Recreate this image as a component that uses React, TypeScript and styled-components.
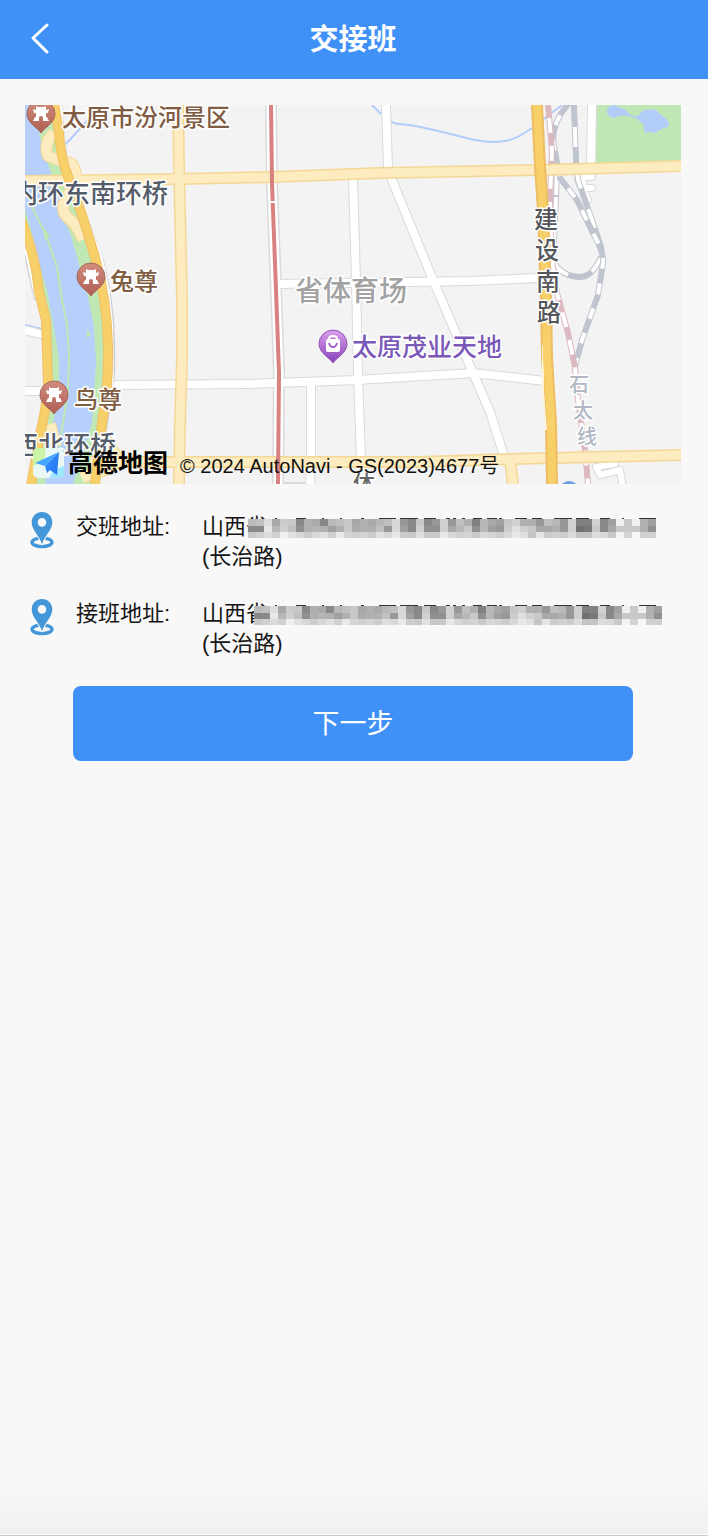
import React from 'react';
import styled, { createGlobalStyle } from 'styled-components';

const GlobalStyle = createGlobalStyle`
  * { box-sizing: border-box; }
  body {
    margin: 0;
    background: #f8f8f8;
    color: #141414;
    font-family: "Liberation Sans", "Noto Sans CJK SC", sans-serif;
  }
`;

const Page = styled.div`
  display: flex;
  flex-direction: column;
  min-height: 100vh;
`;

const Header = styled.header`
  display: grid;
  grid-template-columns: 80px 1fr 80px;
  align-items: center;
  height: 79px;
  padding-right: 2px;
  background: #3f91f7;
  color: #fff;
`;

const BackButton = styled.button`
  display: flex;
  align-items: center;
  justify-content: center;
  width: 80px;
  height: 76px;
  padding: 0 0 4px;
  border: 0;
  background: none;
  color: inherit;
  cursor: pointer;
`;

const Title = styled.h1`
  margin: 0;
  font-size: 29px;
  line-height: 40px;
  font-weight: 700;
  text-align: center;
`;

const Main = styled.main`
  flex: 1;
  padding: 26px 27px 0 25px;
`;

const MapView = styled.svg`
  display: block;
  width: 100%;
  height: auto;
  background: #f3f3f3;
`;

const MapLabel = styled.text<{ $size: number; $color: string }>`
  font-family: "Noto Sans CJK SC", sans-serif;
  font-size: ${(p) => p.$size}px;
  font-weight: 500;
  fill: ${(p) => p.$color};
  stroke: #fff;
  stroke-width: 3px;
  stroke-linejoin: round;
  paint-order: stroke;
`;

const BrandText = styled.text`
  font-family: "Noto Sans CJK SC", sans-serif;
  font-size: 25px;
  font-weight: 700;
`;

const Copyright = styled.text`
  font-family: "Liberation Sans", "Noto Sans CJK SC", sans-serif;
  font-size: 20px;
  fill: #111;
`;

const AddressList = styled.dl`
  display: flex;
  flex-direction: column;
  gap: 27px;
  margin: 28px 0 0;
  font-size: 22px;
  line-height: 30px;
`;

const AddressRow = styled.div`
  display: grid;
  grid-template-columns: 177px 1fr;
`;

const AddressLabel = styled.dt`
  display: flex;
  gap: 22px;
  padding-left: 5px;
`;

const AddressValue = styled.dd`
  margin: 0;
`;

const AddressLine = styled.div`
  display: flex;
  height: 30px;
  white-space: nowrap;
`;

const Mask = styled.svg<{ $overlap: number }>`
  flex: none;
  margin-left: -${(p) => p.$overlap}px;
`;

const NextButton = styled.button`
  display: block;
  width: calc(100% - 96px);
  height: 75px;
  margin: 27px auto 0;
  border: 0;
  border-radius: 8px;
  background: #3f91f7;
  color: #fff;
  font-family: inherit;
  font-size: 27px;
  line-height: 40px;
  cursor: pointer;
`;

const Footer = styled.footer`
  height: 52px;
  border-bottom: 1px solid #cbcbcb;
  background: linear-gradient(#f8f8f8, #f0f0f0);
  box-shadow: inset 0 -1px 0 #fcfcfc;
`;

function PlaceIcon() {
  return (
    <svg width="24" height="38" viewBox="0 0 72 114" aria-hidden="true">
      <ellipse cx="36" cy="91" rx="30" ry="13" fill="none" stroke="#4396d8" strokeWidth="10" />
      <path d="M36 102C31 84 9 64 6 34h60C63 64 41 84 36 102z" fill="#f8f8f8" />
      <path
        fillRule="evenodd"
        d="M36 0C18 0 5 13 5 31C5 55 30 74 36 97C42 74 67 55 67 31C67 13 54 0 36 0ZM36 18a13 13 0 1 1 0 26a13 13 0 1 1 0-26Z"
        fill="#4396d8"
      />
    </svg>
  );
}

/* Grey levels of the mosaic, two hex digits per 8px cell. */
const MASK_ROWS = [
  'bbc0dda8ccc888b0aa88b8c0c8a8b0aab8c0d89888c88898d098c0b080b8a8a0c8d0b0b098c0b898d08080d088a0f0c8f0b0a0',
  '8888e8b8d0c090b0b4b0a0b0c8acb0b0c098d8a088d09090d0a8b8c890b8a098cce0d0c8a8a8b098d07078c888a8c8c8c8b090',
  'c8d0dcd0f0e0d8ccd8e0d0e8d4d0d4cce0d8e8ccc8e0c8c8e8d8d0d4c8d8d4ccd8e8e0c4e4ccd0ccdcc4c4dcd8c8f4d4f8d0d0',
];

/* Stroke tips that stay visible above the mosaic: [x, width]. */
const TIPS: [number, number][] = [
  [27, 2], [48, 10], [74, 2], [92, 2], [113, 3], [131, 17], [152, 18], [176, 12],
  [198, 4], [205, 3], [214, 3], [225, 9], [239, 10], [251, 3], [267, 12], [284, 10],
  [306, 18], [328, 13], [352, 10], [374, 2], [391, 17],
];

function AddressMask({ overlap }: { overlap: number }) {
  return (
    <Mask $overlap={overlap} width="418" height="30" viewBox="0 0 418 30" role="img" aria-label="已隐藏" shapeRendering="crispEdges">
      <rect y="7" width="408" height="19" fill="#f8f8f8" />
      {MASK_ROWS.map((row, r) =>
        row.match(/../g)!.map((g, c) => (
          <rect key={`${r}-${c}`} x={c * 8} y={r === 0 ? 7 : 8 + r * 6} width="8" height={r === 0 ? 7 : 6} fill={`#${g}${g}${g}`} />
        )),
      )}
      {TIPS.map(([x, w]) => (
        <rect key={x} x={x + overlap - 20} y="6" width={w} height="1" fill="#333" />
      ))}
    </Mask>
  );
}

function Address({ label, overlap }: { label: string; overlap: number }) {
  return (
    <AddressRow>
      <AddressLabel>
        <PlaceIcon />
        {label}
      </AddressLabel>
      <AddressValue>
        <AddressLine>
          山西省
          <AddressMask overlap={overlap} />
        </AddressLine>
        <AddressLine>(长治路)</AddressLine>
      </AddressValue>
    </AddressRow>
  );
}

const METRO = 'M271 105L272 183L276 290L279 373L278 484';
const LANE = 'M592 177H582L584 188H592M578 180L588 200M615 464L596 467L600 475L620 470L623 488';
const EXPRESSWAY = 'M537 105L540 167L543 210L546 300L547 357L551 423L552 484';
const RAMPS =
  'M54 133Q43 143 48 156L62 161M66 162Q77 162 76 184M71 190Q58 208 67 217Q77 224 83 240M50 424L56 446M104 436L114 452Q121 463 106 470Q90 474 82 478';

const STREETS = [
  'M386 105L388 167L392 180L433 280L473 373L490 412L505 459',
  'M353 178L356 280L358 373L361 459',
  'M311 384V459L310 484',
  'M279 284L470 281L538 278',
  'M110 385L250 384L357 380L473 373L510 377L545 381',
  'M25 330L44 335',
  'M25 391H46',
  'M592 105L591 170',
];

const AVENUES = [
  'M25 181L180 179L272 177L380 173L540 170L681 166',
  'M178 105L179 167L182 300L182 357L180 423L179 484',
  'M90 462L250 462L420 462L510 459L681 455',
  'M510 460L513 484',
];

const RIVERSIDE = [
  'M54 103L59 133Q60 150 65 168L82 215L95 257Q107 300 108 345Q109 385 102 423L95 484',
  'M21 220Q36 256 39 292L46 320L48 385Q46 410 41 430L31 486',
];

function Pin({ x, y, kind = 'temple' }: { x: number; y: number; kind?: 'temple' | 'shop' }) {
  return (
    <g transform={`translate(${x} ${y})`}>
      <path
        d="M0 19C-3 14-14 9-14 0A14 14 0 1 1 14 0C14 9 3 14 0 19Z"
        fill={kind === 'shop' ? 'url(#shopPin)' : 'url(#templePin)'}
        stroke={kind === 'shop' ? '#8f55b5' : '#a5665b'}
        strokeWidth="1"
      />
      {kind === 'temple' ? (
        <path
          d="M-5-8L-3-7H3L5-8V-4L8-5L7-1H5V3H6L8 7H2V4Q2 2 0 2Q-2 2-2 4V7H-8L-6 3H-5V-1H-7L-8-5L-5-4Z"
          fill="#fff"
        />
      ) : (
        <g>
          <rect x="-7" y="-5" width="14" height="13" rx="2" fill="#fff" />
          <path d="M-4-4V-5Q-4-8 0-8Q4-8 4-5V-4" fill="none" stroke="#fff" strokeWidth="2" />
          <path d="M-4-1Q-3 3 0 3Q3 3 4-1" fill="none" stroke="#a35fd0" strokeWidth="2" />
        </g>
      )}
    </g>
  );
}

function Rail({ d, color = '#bfc4ce', dash = '15 11' }: { d: string; color?: string; dash?: string }) {
  return (
    <g fill="none">
      <path d={d} stroke={color} strokeWidth="6" />
      <path d={d} stroke="#fff" strokeWidth="4" />
      <path d={d} stroke={color} strokeWidth="5" strokeDasharray={dash} />
    </g>
  );
}

function CityMap() {
  return (
    <MapView viewBox="25 105 656 379" role="img" aria-label="地图">
      <defs>
        <linearGradient id="templePin" x1="0" y1="0" x2="0" y2="1">
          <stop offset="0" stopColor="#d28d7e" />
          <stop offset="1" stopColor="#ae5e52" />
        </linearGradient>
        <linearGradient id="shopPin" x1="0" y1="0" x2="0" y2="1">
          <stop offset="0" stopColor="#dca0ec" />
          <stop offset="1" stopColor="#8543b8" />
        </linearGradient>
        <linearGradient id="plane" x1="0" y1="0" x2="1" y2="1">
          <stop offset="0" stopColor="#3d95ff" />
          <stop offset="1" stopColor="#1f70f5" />
        </linearGradient>
      </defs>

      {/* river and banks */}
      <path d="M25 105H55L60 150L70 185L95 257L104 300L107 383L98 447L95 484H32L42 430L48 380L45 320L38 290L25 235Z" fill="#bfe8b4" />
      <path d="M25 105H50L39 133L43 150L51 173L63 197V217L70 233L78 260L88 297L94 327L96 363L92 423L84 450L73 484H45L48 457L53 423L59 390V357L53 323L47 290L40 267L32 233L25 210Z" fill="#b6cffb" />
      <path d="M31 205L45 233L57 267L62 300L67 323L69 357L68 390L63 423L59 450" fill="none" stroke="#bfe8b4" strokeWidth="2" />
      <path d="M42 226L50 236L45 240ZM87 329L91 334L87 338Z" fill="#bfe8b4" />
      <g fill="none" stroke="#b3cdfb" strokeWidth="2">
        <path d="M65 145L88 120L103 105M25 325L42 329M372 105L381 114" />
        <path d="M391 121Q394 124 400 124Q417 125 470 139C505 147 518 138 532 128L562 105" />
      </g>

      {/* park */}
      <rect x="596" y="105" width="85" height="60" fill="#bfe8b4" />
      <path d="M607 110Q609 105 615 105Q622 109 625 109L630 115Q636 117 639 115Q643 109 648 110Q655 107 658 112L665 118Q671 122 668 127Q661 128 656 133L650 132L645 133Q643 127 644 125L636 118L628 116Q619 115 614 118Q606 116 607 110Z" fill="#b2cdf8" />

      {/* streets */}
      <g fill="none" stroke="#dadada" strokeWidth="10">
        {STREETS.map((d) => <path key={d} d={d} />)}
        <path d={METRO} strokeWidth="12" />
        <path d="M279 483H312" strokeWidth="2" />
      </g>
      <g fill="none" stroke="#fff" strokeWidth="8">
        {STREETS.map((d) => <path key={d} d={d} />)}
        <path d={METRO} strokeWidth="9" />
      </g>
      <g fill="none" strokeLinejoin="round" strokeLinecap="round">
        <path d={LANE} stroke="#dadada" strokeWidth="8" />
        <path d={LANE} stroke="#fff" strokeWidth="6" />
      </g>

      {/* railways */}
      <Rail d="M557 163L556 200L553 260Q560 276 580 277Q592 277 601 257" dash="2 30" />
      <Rail d="M574 105L576 160L578 180L593 223L602 250" dash="22 20" />
      <Rail d="M569 103Q553 121 553 140L557 163L560 178L577 200L593 233Q604 252 603 263L598 295L582 340L575 366" />
      <Rail d="M548 105L552 150L550 200L552 260L557 293L568 333L575 367L578 400L585 450L588 484" color="#dcb9c0" dash="13 15" />
      <path d="M568 275Q582 280 592 272" fill="none" stroke="#bfc4ce" strokeWidth="5" />

      {/* avenues */}
      <g fill="none" strokeLinejoin="round">
        <g stroke="#f5d795" strokeWidth="12">
          {AVENUES.map((d) => <path key={d} d={d} />)}
          <path d={RAMPS} />
        </g>
        <g stroke="#fdecbf" strokeWidth="9">
          {AVENUES.map((d) => <path key={d} d={d} />)}
          <path d={RAMPS} strokeWidth="10" />
        </g>
      </g>

      {/* riverside expressways */}
      <g fill="none" strokeLinejoin="round">
        <path d="M61 105L66 155M89 223L102 257Q114 300 114 345Q115 370 113 385L106 430M25 255L35 300" stroke="#d0d0d0" strokeWidth="2" />
        <path d="M60 105L65 155M88 223L101 257Q112 300 112 345V385L104 430M26 250L36 298" stroke="#fff" strokeWidth="3" />
        {RIVERSIDE.map((d) => <path key={d} d={d} stroke="#f0c06a" strokeWidth="10" />)}
        {RIVERSIDE.map((d) => <path key={d} d={d} stroke="#f8d069" strokeWidth="8" />)}
        <path d={EXPRESSWAY} stroke="#eebd65" strokeWidth="12" />
        <path d="M543 345V390L546 430" stroke="#fcf3d8" strokeWidth="2" />
        <path d={EXPRESSWAY} stroke="#f8d069" strokeWidth="8" />
      </g>

      {/* metro line */}
      <path d={METRO} fill="none" stroke="#d98080" strokeWidth="4" />
      <rect x="270" y="201" width="6" height="2" fill="#fff" />
      <circle cx="569" cy="491" r="10" fill="#6d9fe8" />

      {/* labels */}
      <MapLabel x="62" y="126" $size={24} $color="#805c42">太原市汾河景区</MapLabel>
      <MapLabel x="12" y="203" $size={26} $color="#555c6a">内环东南环桥</MapLabel>
      <MapLabel x="110" y="290" $size={24} $color="#805c42">兔尊</MapLabel>
      <MapLabel x="74" y="408" $size={24} $color="#805c42">鸟尊</MapLabel>
      <MapLabel x="12" y="455" $size={26} $color="#555c6a">西北环桥</MapLabel>
      <MapLabel x="295" y="301" $size={28} $color="#a2a2a2">省体育场</MapLabel>
      <MapLabel x="352" y="356" $size={25} $color="#7a58b8">太原茂业天地</MapLabel>
      <MapLabel x="353" y="491" $size={22} $color="#666">体</MapLabel>
      {['建', '设', '南', '路'].map((c, i) => (
        <MapLabel key={c} x={534 + i} y={228 + i * 31} $size={24} $color="#54565c">{c}</MapLabel>
      ))}
      {['石', '太', '线'].map((c, i) => (
        <MapLabel key={c} x={569 + i * 4} y={392 + i * 26} $size={20} $color="#b0b7c3">{c}</MapLabel>
      ))}

      <Pin x={41} y={114} />
      <Pin x={91} y={277} />
      <Pin x={54} y={395} />
      <Pin x={333} y={344} kind="shop" />

      {/* provider mark */}
      <rect x="33" y="448" width="31" height="30" rx="5" fill="#e9f8f5" />
      <path d="M38 448H45Q48 462 33 466V453Q33 448 38 448Z" fill="#caf5a6" />
      <path d="M49 478L54 470L64 466V473Q64 478 59 478Z" fill="#9fe6ff" />
      <path d="M59 452L35 463L45 466Z" fill="#45a5ff" />
      <path d="M59 452L45 466L47 473L50 470L57 475Z" fill="url(#plane)" />
      <BrandText x="68" y="472">高德地图</BrandText>
      <Copyright x="180" y="473">© 2024 AutoNavi - GS(2023)4677号</Copyright>
    </MapView>
  );
}

export default function App() {
  return (
    <Page lang="zh-CN">
      <GlobalStyle />
      <Header>
        <BackButton type="button" aria-label="返回">
          <svg width="20" height="32" viewBox="0 0 20 32" fill="none" stroke="#fff" strokeWidth="3" strokeLinecap="round" strokeLinejoin="round">
            <path d="M17 3L3 16L17 30" />
          </svg>
        </BackButton>
        <Title>交接班</Title>
      </Header>
      <Main>
        <CityMap />
        <AddressList>
          <Address label="交班地址:" overlap={20} />
          <Address label="接班地址:" overlap={14} />
        </AddressList>
        <NextButton type="button">下一步</NextButton>
      </Main>
      <Footer />
    </Page>
  );
}
